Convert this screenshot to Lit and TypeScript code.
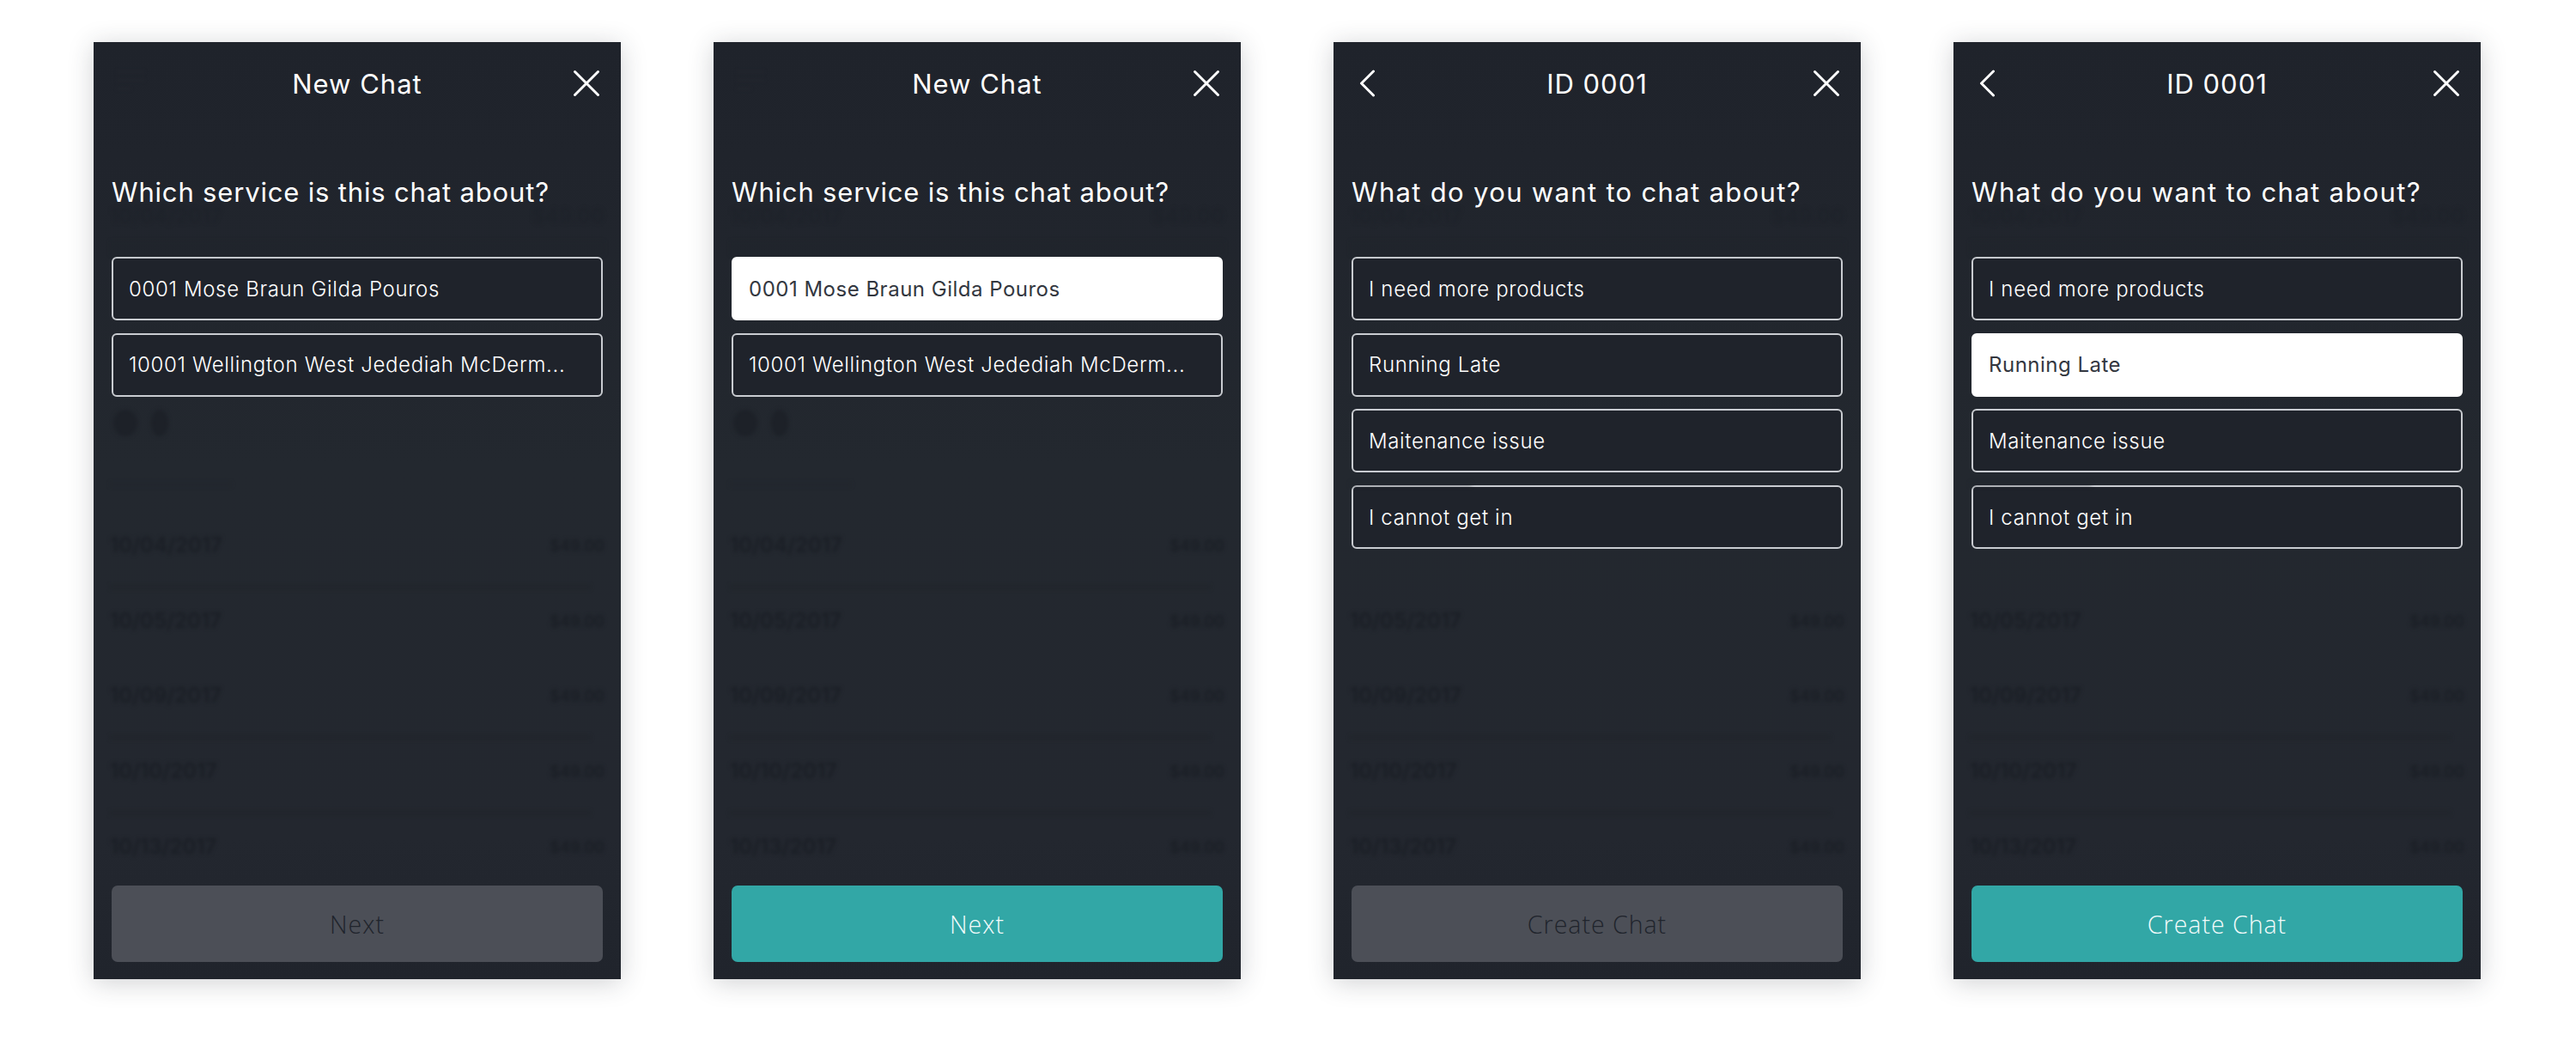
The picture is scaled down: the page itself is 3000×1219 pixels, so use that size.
import { LitElement, html, css, nothing } from "lit";
import { customElement, property } from "lit/decorators.js";

const closeIcon = html`<svg class="icon" width="32" height="32" viewBox="0 0 32 32" fill="none" stroke="#fff" stroke-width="3" stroke-linecap="round"><path d="M2.5 2.5 L29.5 29.5 M29.5 2.5 L2.5 29.5"/></svg>`;
const backIcon = html`<svg class="icon back" width="32" height="32" viewBox="0 0 32 32" fill="none" stroke="#fff" stroke-width="3" stroke-linecap="round" stroke-linejoin="round"><path d="M16.5 2 L2.5 16 L16.5 30"/></svg>`;

interface Screen {
  title: string;
  back: boolean;
  question: string;
  options: string[];
  selected: number;
  action: string;
  enabled: boolean;
}

const services = ["0001 Mose Braun Gilda Pouros", "10001 Wellington West Jedediah McDerm..."];
const topics = ["I need more products", "Running Late", "Maitenance issue", "I cannot get in"];

const screens: Screen[] = [
  { title: "New Chat", back: false, question: "Which service is this chat about?", options: services, selected: -1, action: "Next", enabled: false },
  { title: "New Chat", back: false, question: "Which service is this chat about?", options: services, selected: 0, action: "Next", enabled: true },
  { title: "ID 0001", back: true, question: "What do you want to chat about?", options: topics, selected: -1, action: "Create Chat", enabled: false },
  { title: "ID 0001", back: true, question: "What do you want to chat about?", options: topics, selected: 1, action: "Create Chat", enabled: true },
];

@customElement("ghost-layer")
class GhostLayer extends LitElement {
  @property({ type: Boolean }) full = false;
  static styles = css`
    :host { display: flex; flex-direction: column; padding: 0 19px; filter: blur(2px); pointer-events: none; }
    .menu { height: 64px; padding-top: 34px; box-sizing: border-box; display: flex; flex-direction: column; align-items: flex-start; }
    .menu i { display: block; height: 4px; width: 32px; margin-bottom: 9px; margin-left: 8px; background: #282c34; }
    .menu i:last-child { width: 16px; }
    .row { display: flex; justify-content: space-between; align-items: flex-end; font: 600 24px/23px "Inter", sans-serif; color: #1a1e25; }
    .first { margin-top: 130px; height: 20px; opacity: .3; }
    .stripe { margin-top: 17px; height: 17px; background: #1e2229; opacity: .2; }
    .avatars { margin-top: 180px; height: 31px; display: flex; gap: 16px; padding-left: 4px; }
    .avatars i { display: block; width: 28px; height: 31px; border-radius: 50%; background: #1d2128; }
    .avatars i + i { width: 20px; }
    .avatars.off i { visibility: hidden; }
    .faint { margin-top: 53px; height: 6px; width: 142px; background: #20242b; opacity: .25; }
    .list { margin-top: 56px; }
    .item { height: 87.7px; }
    .item .sep { height: 5px; margin-top: 35px; width: 560px; background: #1f2329; opacity: .45; }
    .item .right { font-size: 18px; line-height: 20px; }
    .item.off > * { visibility: hidden; }
  `;
  render() {
    const dates = ["10/04/2017", "10/05/2017", "10/09/2017", "10/10/2017", "10/13/2017"];
    return html`
      <div class="menu">${this.full ? html`<i></i><i></i><i></i>` : nothing}</div>
      <div class="row first"><span>10/04/2017</span><span class="right">$49.00</span></div>
      <div class="stripe"></div>
      <div class="avatars ${this.full ? "" : "off"}"><i></i><i></i></div>
      <div class="faint"></div>
      <div class="list">
        ${dates.map((d, i) => html`<div class="item ${i === 0 && !this.full ? "off" : ""}">
          <div class="row"><span>${d}</span><span class="right">$49.00</span></div>
          ${i !== 1 && i !== 4 ? html`<div class="sep"></div>` : nothing}
        </div>`)}
      </div>
    `;
  }
}

@customElement("chat-panel")
class ChatPanel extends LitElement {
  @property({ attribute: false }) screen!: Screen;
  static styles = css`
    :host {
      display: grid; width: 614px; height: 1091px; flex: none; overflow: hidden;
      background: linear-gradient(180deg, #1f232b 0%, #20242c 12%, #23282f 45%, #23272f 85%, #20242c 100%);
      box-shadow: 0 4px 28px rgba(40, 45, 55, .22);
      font-family: "Inter", sans-serif; color: #fff;
    }
    :host > * { grid-area: 1 / 1; min-width: 0; }
    .content { display: flex; flex-direction: column; padding: 0 21px 20px; box-sizing: border-box; height: 1091px; }
    .header { height: 96px; display: grid; grid-template-columns: 1fr auto 1fr; align-items: center; }
    .title { font-size: 31px; font-weight: 400; letter-spacing: 1px; }
    .left { display: flex; }
    .right { display: flex; justify-content: flex-end; padding-right: 3px; }
    .icon { display: block; }
    .back { margin-left: 9px; }
    .question { margin: 61px 0 57px; font-size: 31px; line-height: 36px; font-weight: 400; letter-spacing: .83px; }
    .question.wide { letter-spacing: 1.33px; }
    .options { display: flex; flex-direction: column; gap: 14.7px; }
    .option {
      height: 74px; box-sizing: border-box; display: flex; align-items: center; padding: 0 18px; background: #1f232b;
      border: 2px solid #c9ccd1; border-radius: 6px; font-size: 24px; font-weight: 350; letter-spacing: .66px; white-space: nowrap; overflow: hidden;
    }
    .option.on { background: #fff; border-color: #fff; color: #33373f; font-weight: 400; letter-spacing: .5px; }
    .action {
      margin-top: auto; height: 89px; border-radius: 7px; display: flex; align-items: center; justify-content: center;
      font-family: "Open Sans", sans-serif; font-weight: 300; font-size: 28.5px; letter-spacing: 1px; background: #4c4f57; color: #20242c;
    }
    .action.on { background: #32a7a6; color: #f3fbfb; }
  `;
  render() {
    const s = this.screen;
    return html`
      <ghost-layer ?full=${!s.back}></ghost-layer>
      <div class="content">
        <div class="header">
          <div class="left">${s.back ? backIcon : nothing}</div>
          <div class="title">${s.title}</div>
          <div class="right">${closeIcon}</div>
        </div>
        <div class="question ${s.back ? "wide" : ""}">${s.question}</div>
        <div class="options">
          ${s.options.map((o, i) => html`<div class="option ${i === s.selected ? "on" : ""}">${o}</div>`)}
        </div>
        <div class="action ${s.enabled ? "on" : ""}">${s.action}</div>
      </div>
    `;
  }
}

@customElement("app-root")
class AppRoot extends LitElement {
  static styles = css`
    :host { display: block; background: #fff; min-height: 1219px; }
    .row { display: flex; gap: 108px; padding: 49px 0 0 109px; }
  `;
  render() {
    return html`<div class="row">${screens.map((s) => html`<chat-panel .screen=${s}></chat-panel>`)}</div>`;
  }
}
